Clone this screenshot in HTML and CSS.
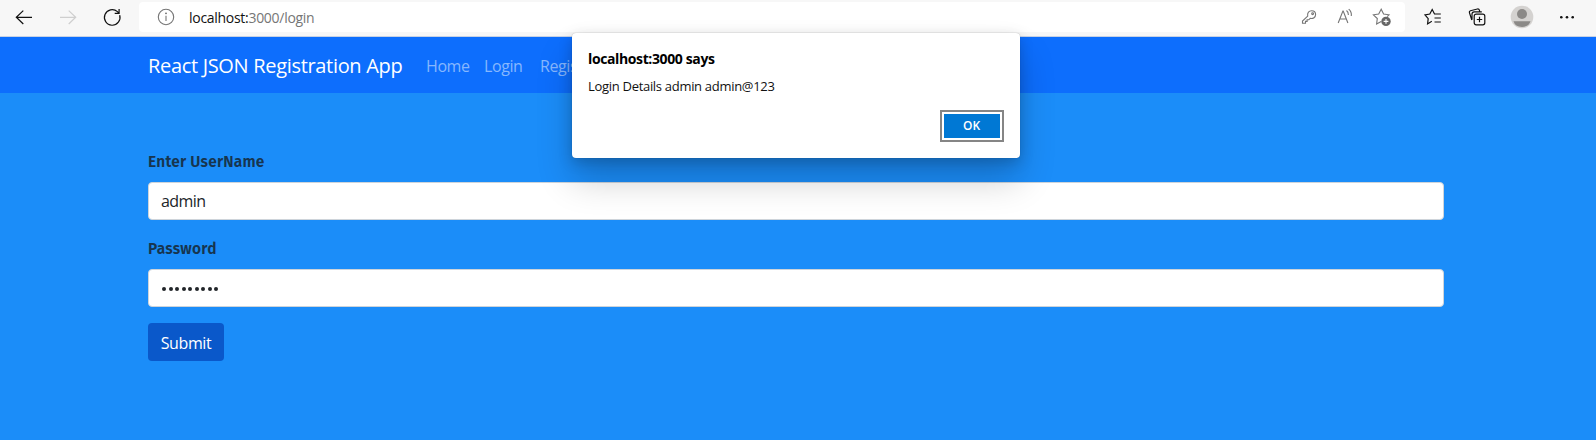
FILE: index.html
```html
<!DOCTYPE html>
<html lang="en">
<head>
<meta charset="utf-8">
<title>React JSON Registration App</title>
<link rel="stylesheet" href="styles.css">
</head>
<body>
<header class="toolbar">
  <div class="history">
    <svg class="icon" viewBox="0 0 20 20"><path d="M18 10.3H2.3M9.3 3.6L2.3 10.3L9.3 17"/></svg>
    <svg class="icon icon-disabled" viewBox="0 0 20 20"><path d="M2 10.3H17.7M10.7 3.6L17.7 10.3L10.7 17"/></svg>
    <svg class="icon" viewBox="0 0 20 20"><path d="M17.7 8.2A7.8 7.8 0 1 1 15.4 4.6L17 6.2M17.1 2V6.4H12.7"/></svg>
  </div>
  <div class="address">
    <svg class="icon icon-grey info" viewBox="0 0 20 20"><circle cx="10" cy="10" r="7.7"/><path d="M10 8.7V14"/><circle class="dot" cx="10" cy="6.3" r=".9"/></svg>
    <div class="url"><span class="host">localhost:</span>3000/login</div>
    <svg class="icon icon-grey key" viewBox="0 0 20 20"><path d="M8.7 9.1C8.1 5.8 10 3.7 12.6 3.7C15 3.7 16.6 5.4 16.6 7.6C16.6 10.2 14.2 12 11.2 11.4L9.8 12.8H8.1V14.4H6.5V16.2H3.5V14Z"/><circle cx="13.6" cy="6.7" r=".9"/></svg>
    <svg class="icon icon-grey read" viewBox="0 0 20 20"><path d="M3.2 16L7.9 4H8.2L12.9 16M4.9 12H11.2M11.5 3.5Q13.5 5 13.4 8M13.7 2.2Q16.9 5 16.3 9"/></svg>
    <svg class="icon icon-grey add" viewBox="0 0 20 20"><path d="M9.2 14.5L4.6 17L5.3 11.5L1.4 7.8L6.7 7L9.2 2.2L11.6 7L17 7.8L15.2 9.6"/><circle class="badge" cx="14" cy="14.4" r="4.7"/><path class="plus" d="M11.6 14.4H16.4M14 12V16.8"/></svg>
  </div>
  <div class="actions">
    <svg class="icon" viewBox="0 0 20 20"><path d="M8.8 14.2L4.6 16.9L5.2 11.6L2 7.8L6.8 7L9.2 2.5L11.5 7H17.8M11.5 11H17.8M11.5 15H17.8"/></svg>
    <svg class="icon" viewBox="0 0 20 20"><rect x="7.2" y="7.2" width="10.6" height="10.6" rx="2"/><path d="M12.5 9.8V15.2M9.8 12.5H15.2M4.8 13L2.4 5.6Q2 4.3 3.4 3.7L10.4 2Q12 1.8 12.4 3.2L12.7 4.6M5 12.7V7Q5 4.8 7.2 4.8H14.8"/></svg>
    <svg class="avatar" viewBox="0 0 24 24"><circle class="avatar-bg" cx="12" cy="12" r="11.3"/><circle cx="12" cy="9" r="5"/><path d="M3.5 16.3H20.5Q19 21.8 12 22Q5 21.8 3.5 16.3Z"/></svg>
    <svg class="icon icon-fill" viewBox="0 0 20 20"><circle cx="4.3" cy="10.3" r="1.3"/><circle cx="10" cy="10.3" r="1.3"/><circle cx="15.7" cy="10.3" r="1.3"/></svg>
  </div>
</header>
<nav class="navbar">
  <div class="brand">React JSON Registration App</div>
  <div class="link home">Home</div>
  <div class="link login">Login</div>
  <div class="link register">Register</div>
</nav>
<main class="form">
  <div class="label user">Enter UserName</div>
  <div class="field">admin</div>
  <div class="label">Password</div>
  <div class="field"><span class="mask"><i></i><i></i><i></i><i></i><i></i><i></i><i></i><i></i><i></i></span></div>
  <button class="submit">Submit</button>
</main>
<div class="dialog">
  <div class="dialog-title">localhost:3000 says</div>
  <div class="dialog-text">Login Details admin admin@123</div>
  <button class="ok">OK</button>
</div>
</body>
</html>
```
FILE: styles.css
```css
* { box-sizing: border-box; }
body {
  margin: 0;
  height: 440px;
  overflow: hidden;
  background: #1b8df9;
  font-family: "Open Sans", "Noto Sans", sans-serif;
}
.toolbar {
  display: flex;
  height: 37px;
  padding-top: 2px;
  background: #f7f7f7;
  border-bottom: 1px solid #c8d2e4;
}
.history { display: flex; width: 139px; padding: 5px 0 0 14px; gap: 24px; }
.icon { width: 20px; height: 20px; flex: none; fill: none; stroke: #111; stroke-width: 1.2; }
.icon-disabled { stroke: #cfcfcf; }
.icon-grey { stroke: #757575; stroke-width: 1.1; }
.dot, .badge { fill: #666; stroke: none; }
.plus { stroke: #fff; }
.icon-fill { fill: #111; stroke: none; }
.address {
  display: flex;
  align-items: center;
  width: 1266px;
  height: 30px;
  padding: 0 13px 0 17px;
  background: #fff;
  border-radius: 4px;
}
.url { flex: 1; margin-left: 13px; padding-top: 1px; font-size: 14px; line-height: 20px; color: #767676; letter-spacing: -.29px; }
.host { color: #111; }
.key { margin-right: 16px; }
.read { margin-right: 17px; }
.actions { display: flex; padding: 5px 0 0 18px; gap: 24px; }
.avatar { width: 24px; height: 24px; margin: -2px -1px 0 -1px; fill: #8b8987; }
.avatar-bg { fill: #d4d2d0; }
.navbar {
  display: flex;
  align-items: center;
  height: 56px;
  padding: 2px 0 0 148px;
  background: #0d6efd;
  white-space: nowrap;
}
.brand { width: 278px; font-size: 20px; line-height: 30px; color: #fff; letter-spacing: -.32px; }
.link { font-size: 16px; line-height: 24px; color: #86b7fe; letter-spacing: -.4px; }
.home { width: 58px; }
.login { width: 56px; }
.form { display: flex; flex-direction: column; align-items: flex-start; padding: 56px 152px 0 148px; }
.label { height: 33px; padding-top: 1px; font-family: "Fira Sans", "Noto Sans", sans-serif; font-size: 15.5px; line-height: 24px; font-weight: 600; color: #17354f; letter-spacing: .25px; }
.user { letter-spacing: .2px; }
.field {
  width: 100%;
  height: 38px;
  margin-bottom: 16px;
  padding: 6px 12px;
  font-size: 16px;
  line-height: 24px;
  color: #212529;
  background: #fff;
  border: 1px solid #ced4da;
  border-radius: 4px;
  letter-spacing: -.6px;
}
.mask { display: flex; align-items: center; height: 26px; gap: 2.5px; padding-left: 1px; }
.mask i { width: 4px; height: 4px; border-radius: 50%; background: #212529; }
.submit {
  width: 76px;
  height: 38px;
  padding: 1px 0 0;
  font: 16px "Open Sans", sans-serif;
  color: #fff;
  background: #0a58ca;
  border: 0;
  border-radius: 4px;
  letter-spacing: -.4px;
}
.dialog {
  position: absolute;
  left: 572px;
  top: 33px;
  width: 448px;
  height: 125px;
  padding: 16px 16px 16px;
  display: flex;
  flex-direction: column;
  background: #fff;
  border-radius: 4px;
  box-shadow: 0 0 1px rgba(0,0,0,.3), 0 22px 36px rgba(0,0,0,.2), 0 4px 14px rgba(0,0,0,.18);
}
.dialog-title { font-size: 14px; line-height: 20px; font-weight: 700; color: #000; letter-spacing: -.38px; }
.dialog-text { margin-top: 8px; font-size: 13px; line-height: 18px; color: #111; letter-spacing: -.3px; }
.ok {
  align-self: flex-end;
  width: 56px;
  height: 24px;
  margin: 19px 4px 0 0;
  padding: 0 1px 1px 0;
  font: 600 12px "Open Sans", sans-serif;
  color: #fff;
  background: #0078d4;
  border: 0;
  box-shadow: 0 0 0 2px #fff, 0 0 0 4px #858585;
}
```
